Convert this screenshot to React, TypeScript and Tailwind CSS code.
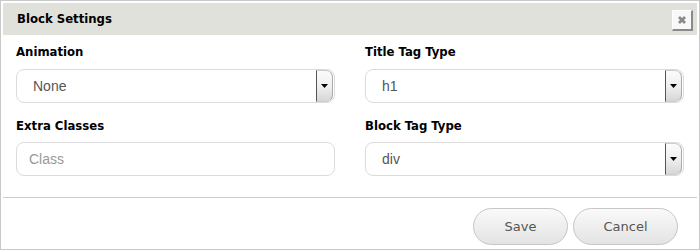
import React from "react";

const labelFont = { fontFamily: '"DejaVu Sans Condensed", "DejaVu Sans", sans-serif' };

function Label({ children }: { children: React.ReactNode }) {
  return (
    <div
      className="h-[16px] text-[13px] leading-[16px] font-bold text-black"
      style={labelFont}
    >
      {children}
    </div>
  );
}

function Select({ value }: { value: string }) {
  return (
    <div className="relative h-[34px] w-full rounded-[8px] border border-[#dcdcdc] bg-white flex items-center">
      <span className="pl-[16px] text-[14px] text-[#555] font-['Liberation_Sans',Arial,sans-serif]">
        {value}
      </span>
      <div className="absolute right-[1px] top-[0px] bottom-[0px] w-[17px] border-l border-l-[#555] border-r border-r-[#aaa] border-y border-y-[#ccc] rounded-r-[7px] bg-gradient-to-b from-[#fbfbfb] via-[#f0f0f0] to-[#d6d6d6] flex items-center justify-center">
        <svg width="7" height="4" viewBox="0 0 7 4">
          <polygon points="0,0 7,0 3.5,4" fill="#000" />
        </svg>
      </div>
    </div>
  );
}

function Btn({ children, w }: { children: React.ReactNode; w: string }) {
  return (
    <div
      className={`${w} h-[37px] rounded-full border border-[#c6c6c6] bg-gradient-to-b from-[#fafafa] to-[#e3e3e3] flex items-center justify-center text-[13px] text-[#555]`}
      style={{ fontFamily: '"DejaVu Sans", Verdana, sans-serif' }}
    >
      {children}
    </div>
  );
}

export default function App() {
  return (
    <div className="w-[700px] h-[250px] border border-[#c8c8c8] p-[2px] bg-white overflow-hidden flex flex-col">
      <div className="h-[32px] shrink-0 bg-[#e1e1dc] flex items-center justify-between pl-[14px] pr-[4px]">
        <span className="text-[13px] leading-[16px] font-bold text-black" style={labelFont}>
          Block Settings
        </span>
        <div className="w-[21px] h-[21px] mt-[2px] bg-[#f8f8f8] border-t border-l border-t-[#fff] border-l-[#fff] border-r-2 border-b-2 border-r-[#8a8a8a] border-b-[#8a8a8a] flex items-center justify-center">
          <svg width="8" height="8" viewBox="0 0 8 8">
            <path d="M1 1 L7 7 M7 1 L1 7" stroke="#8a8a8a" strokeWidth="2.8" strokeLinecap="butt" />
          </svg>
        </div>
      </div>

      <div className="grid grid-cols-[319px_319px] gap-x-[30px] pl-[13px] pt-[9px]">
        <div className="flex flex-col">
          <Label>Animation</Label>
          <div className="mt-[9px]">
            <Select value="None" />
          </div>
          <div className="mt-[15px]">
            <Label>Extra Classes</Label>
          </div>
          <div className="mt-[8px] h-[34px] w-full rounded-[8px] border border-[#dcdcdc] bg-white flex items-center">
            <span className="pl-[12px] text-[14px] text-[#999] font-['Liberation_Sans',Arial,sans-serif]">
              Class
            </span>
          </div>
        </div>
        <div className="flex flex-col">
          <Label>Title Tag Type</Label>
          <div className="mt-[9px]">
            <Select value="h1" />
          </div>
          <div className="mt-[15px]">
            <Label>Block Tag Type</Label>
          </div>
          <div className="mt-[8px]">
            <Select value="div" />
          </div>
        </div>
      </div>

      <div className="mt-[21px] border-t border-[#cccccc]" />

      <div className="flex justify-end gap-[5px] pr-[19px] pt-[10px]">
        <Btn w="w-[95px]">Save</Btn>
        <Btn w="w-[105px]">Cancel</Btn>
      </div>
    </div>
  );
}
